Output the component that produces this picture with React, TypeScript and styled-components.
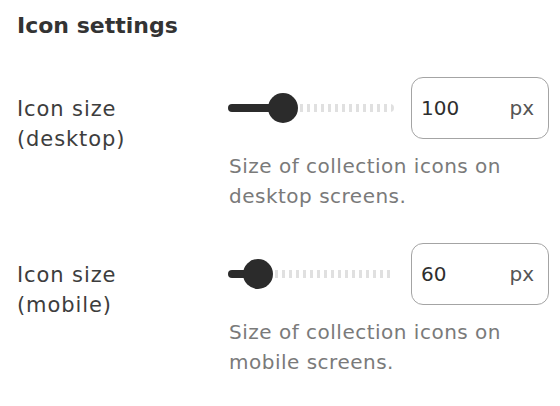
import React from "react";
import styled, { createGlobalStyle } from "styled-components";

const Global = createGlobalStyle`
  html, body { margin: 0; padding: 0; background: #fff; }
  body { font-family: "DejaVu Sans", Roboto, sans-serif; }
`;

const Panel = styled.section`
  width: 560px;
  height: 406px;
  box-sizing: border-box;
  padding: 12px 0 0 17px;
  background: #fff;
`;

const Title = styled.h2`
  margin: 0 0 37px 0;
  font-size: 22px;
  line-height: 28px;
  font-weight: 700;
  color: #333;
`;

const Row = styled.div`
  display: grid;
  grid-template-columns: 211px 322px;
  margin-bottom: 32px;
`;

const Label = styled.div`
  padding-top: 17px;
  font-size: 21px;
  line-height: 30px;
  letter-spacing: 0.9px;
  color: #3d3d3d;
`;

const Controls = styled.div`
  display: flex;
  flex-direction: column;
`;

const ControlLine = styled.div`
  display: flex;
  align-items: center;
  gap: 17px;
`;

const Slider = styled.div`
  display: flex;
  align-items: center;
  width: 166px;
  height: 30px;
`;

const Fill = styled.div`
  height: 8px;
  border-radius: 4px 0 0 4px;
  background: #2b2b2b;
  margin-right: -4px;
`;

const Thumb = styled.div`
  width: 30px;
  height: 30px;
  border-radius: 50%;
  background: #2b2b2b;
  flex: none;
`;

const Rest = styled.div`
  flex: 1;
  height: 8px;
  margin-left: 2px;
  border-radius: 0 4px 4px 0;
  background: repeating-linear-gradient(
    90deg,
    #e0e0e0 0 3px,
    transparent 3px 7px
  );
`;

const NumberBox = styled.div`
  box-sizing: border-box;
  width: 138px;
  height: 62px;
  border: 1.5px solid #a4a4a4;
  border-radius: 12px;
  display: flex;
  align-items: center;
  justify-content: space-between;
  padding: 0 14px 0 9px;
  font-size: 20px;
`;

const Value = styled.span`
  color: #2e2e2e;
`;

const Unit = styled.span`
  color: #555;
`;

const Help = styled.div`
  margin: 12px 0 0 1px;
  font-size: 20px;
  line-height: 30px;
  letter-spacing: 0.5px;
  color: #7a7a7a;
`;

type SettingProps = {
  label: string[];
  value: number;
  fill: number;
  help: string[];
};

function Setting({ label, value, fill, help }: SettingProps) {
  return (
    <Row>
      <Label>
        {label.map((l) => (
          <div key={l}>{l}</div>
        ))}
      </Label>
      <Controls>
        <ControlLine>
          <Slider>
            <Fill style={{ width: fill }} />
            <Thumb />
            <Rest />
          </Slider>
          <NumberBox>
            <Value>{value}</Value>
            <Unit>px</Unit>
          </NumberBox>
        </ControlLine>
        <Help>
          {help.map((h) => (
            <div key={h}>{h}</div>
          ))}
        </Help>
      </Controls>
    </Row>
  );
}

export default function App() {
  return (
    <Panel>
      <Global />
      <Title>Icon settings</Title>
      <Setting
        label={["Icon size", "(desktop)"]}
        value={100}
        fill={44}
        help={["Size of collection icons on", "desktop screens."]}
      />
      <Setting
        label={["Icon size", "(mobile)"]}
        value={60}
        fill={19}
        help={["Size of collection icons on", "mobile screens."]}
      />
    </Panel>
  );
}
